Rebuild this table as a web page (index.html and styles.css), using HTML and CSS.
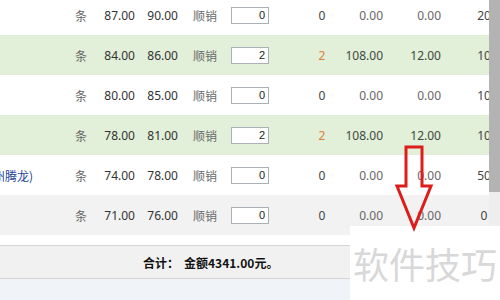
FILE: index.html
```html
<!DOCTYPE html>
<html lang="zh-CN">
<head>
<meta charset="utf-8">
<title>订单明细</title>
<link rel="stylesheet" href="styles.css">
</head>
<body>
<div class="page">
  <div class="main">
    <div class="table">
      <div class="row">
        <div class="c-name"></div>
        <div class="c-unit">条</div>
        <div class="c-p1">87.00</div>
        <div class="c-p2">90.00</div>
        <div class="c-type">顺销</div>
        <div class="c-input"><input class="qty-input" type="text" value="0"></div>
        <div class="c-qty">0</div>
        <div class="c-amt">0.00</div>
        <div class="c-amt2">0.00</div>
        <div class="c-last"><span>20</span></div>
      </div>
      <div class="row green">
        <div class="c-name"></div>
        <div class="c-unit">条</div>
        <div class="c-p1">84.00</div>
        <div class="c-p2">86.00</div>
        <div class="c-type">顺销</div>
        <div class="c-input"><input class="qty-input" type="text" value="2"></div>
        <div class="c-qty orange">2</div>
        <div class="c-amt">108.00</div>
        <div class="c-amt2">12.00</div>
        <div class="c-last"><span>10</span></div>
      </div>
      <div class="row">
        <div class="c-name"></div>
        <div class="c-unit">条</div>
        <div class="c-p1">80.00</div>
        <div class="c-p2">85.00</div>
        <div class="c-type">顺销</div>
        <div class="c-input"><input class="qty-input" type="text" value="0"></div>
        <div class="c-qty">0</div>
        <div class="c-amt">0.00</div>
        <div class="c-amt2">0.00</div>
        <div class="c-last"><span>10</span></div>
      </div>
      <div class="row green">
        <div class="c-name"></div>
        <div class="c-unit">条</div>
        <div class="c-p1">78.00</div>
        <div class="c-p2">81.00</div>
        <div class="c-type">顺销</div>
        <div class="c-input"><input class="qty-input" type="text" value="2"></div>
        <div class="c-qty orange">2</div>
        <div class="c-amt">108.00</div>
        <div class="c-amt2">12.00</div>
        <div class="c-last"><span>10</span></div>
      </div>
      <div class="row">
        <div class="c-name"><span class="name-link">(苏州腾龙)</span></div>
        <div class="c-unit">条</div>
        <div class="c-p1">74.00</div>
        <div class="c-p2">78.00</div>
        <div class="c-type">顺销</div>
        <div class="c-input"><input class="qty-input" type="text" value="0"></div>
        <div class="c-qty">0</div>
        <div class="c-amt">0.00</div>
        <div class="c-amt2">0.00</div>
        <div class="c-last"><span>50</span></div>
      </div>
      <div class="row gray">
        <div class="c-name"></div>
        <div class="c-unit">条</div>
        <div class="c-p1">71.00</div>
        <div class="c-p2">76.00</div>
        <div class="c-type">顺销</div>
        <div class="c-input"><input class="qty-input" type="text" value="0"></div>
        <div class="c-qty">0</div>
        <div class="c-amt">0.00</div>
        <div class="c-amt2">0.00</div>
        <div class="c-last"><span>0</span></div>
      </div>
    </div>
    <div class="scrollbar"><div class="thumb"></div></div>
  </div>
  <div class="spacer"></div>
  <div class="summary"><span class="sum-label">合计：</span><span class="sum-value">金额4341.00元。</span></div>
  <div class="footer"></div>

  <div class="watermark">软件技巧</div>
  <svg class="arrow" width="50" height="95" viewBox="0 0 50 95">
    <polygon points="16,7 32,7 32,46 41,46 24,88 7,46 16,46" fill="none" stroke="#dd1c1c" stroke-width="3" stroke-linejoin="miter"/>
  </svg>
</div>
</body>
</html>
```

FILE: styles.css
```css
* { box-sizing: border-box; }

html, body {
  margin: 0;
  padding: 0;
  width: 500px;
  height: 300px;
  overflow: hidden;
  background: #ffffff;
}

.page {
  position: relative;
  width: 500px;
  height: 300px;
  overflow: hidden;
  font-family: "Noto Sans", "Noto Sans CJK SC", sans-serif;
  font-size: 12px;
  color: #333333;
}

.main {
  display: flex;
  margin-top: -5px;
}

.table {
  width: 489px;
  display: flex;
  flex-direction: column;
}

.row {
  display: grid;
  grid-template-columns: 60px 42px 33px 43px 53px 69px 44px 39px 58px 48px;
  height: 40px;
  align-items: center;
  background: #ffffff;
}

.row.green { background: #e2efd9; }
.row.gray { background: #f2f2f2; }

.c-name {
  display: flex;
  justify-content: flex-end;
  overflow: hidden;
  white-space: nowrap;
  padding-right: 27px;
}

.name-link {
  color: #22449a;
  font-family: "Noto Sans CJK SC", sans-serif;
  font-size: 12px;
}

.c-unit {
  text-align: center;
  color: #666666;
  font-family: "Noto Sans CJK SC", sans-serif;
}

.c-p1, .c-p2 {
  text-align: right;
  color: #333333;
}

.c-type {
  padding-left: 15px;
  color: #6a6a6a;
  font-family: "Noto Sans CJK SC", sans-serif;
}

.c-input {
  display: flex;
  align-items: center;
}

.qty-input {
  width: 38px;
  height: 17px;
  margin: 0;
  padding: 0 3px 0 0;
  border: 1px solid #aab0b5;
  border-radius: 0;
  outline: none;
  background: #ffffff;
  text-align: right;
  font-family: "Liberation Sans", sans-serif;
  font-size: 11px;
  color: #222222;
}

.c-qty {
  text-align: center;
  color: #444444;
}

.c-qty.orange { color: #d98232; }

.c-amt, .c-amt2 {
  text-align: right;
  color: #666666;
}

.row.green .c-amt, .row.green .c-amt2 { color: #3f4a3f; }

.c-last {
  overflow: hidden;
  white-space: nowrap;
  padding-left: 28px;
}

.c-last span {
  display: block;
  width: 30px;
  text-align: center;
  color: #444444;
}

.scrollbar {
  width: 11px;
  background: #eeeeee;
  display: flex;
  flex-direction: column;
}

.thumb {
  height: 197px;
  background: #b3b3b3;
}

.spacer {
  height: 10px;
  background: #ffffff;
}

.summary {
  height: 34px;
  border-top: 1px solid #d4d4d4;
  border-bottom: 1px solid #d4d4d4;
  background: #f1f1f1;
  display: flex;
  align-items: center;
  padding-left: 143px;
  padding-top: 1px;
  font-family: "Noto Sans CJK SC", sans-serif;
  font-weight: bold;
  font-size: 12px;
  color: #111111;
}

.sum-label { margin-right: 5px; }

.footer {
  height: 30px;
  background: #f0f3f7;
}

.watermark {
  position: absolute;
  left: 350px;
  top: 226px;
  width: 150px;
  height: 74px;
  background: #ffffff;
  display: flex;
  align-items: center;
  padding-left: 3px;
  font-family: "Noto Sans CJK SC", sans-serif;
  font-size: 36px;
  color: #d8d8d8;
  white-space: nowrap;
}

.arrow {
  position: absolute;
  left: 390px;
  top: 140px;
}
```
